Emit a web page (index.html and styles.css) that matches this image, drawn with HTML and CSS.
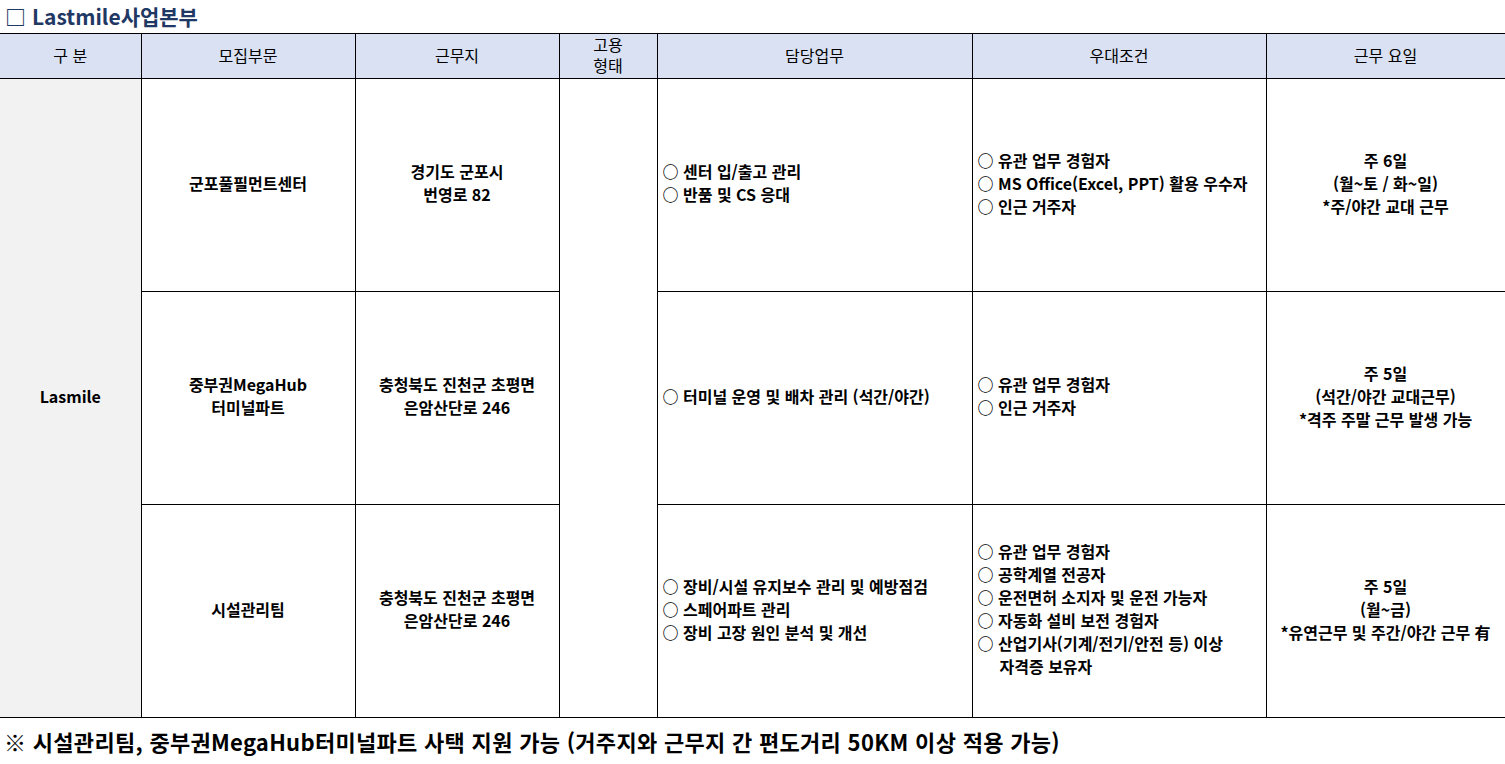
FILE: index.html
```html
<!DOCTYPE html>
<html lang="ko">
<head>
<meta charset="utf-8">
<link rel="stylesheet" href="styles.css">
</head>
<body>
<div class="title">□ Lastmile사업본부</div>
<table class="jobs">
  <colgroup>
    <col class="c1"><col class="c2"><col class="c3"><col class="c4"><col class="c5"><col class="c6"><col class="c7">
  </colgroup>
  <thead>
    <tr class="head">
      <th class="first">구 분</th>
      <th>모집부문</th>
      <th>근무지</th>
      <th>고용<br>형태</th>
      <th>담당업무</th>
      <th>우대조건</th>
      <th>근무 요일</th>
    </tr>
  </thead>
  <tbody>
    <tr class="row">
      <td class="first group" rowspan="3">Lasmile</td>
      <td class="center">군포풀필먼트센터</td>
      <td class="center">경기도 군포시<br>번영로 82</td>
      <td class="empty" rowspan="3"></td>
      <td class="left">
        <div class="item">○ 센터 입/출고 관리</div>
        <div class="item">○ 반품 및 CS 응대</div>
      </td>
      <td class="left">
        <div class="item">○ 유관 업무 경험자</div>
        <div class="item">○ MS Office(Excel, PPT) 활용 우수자</div>
        <div class="item">○ 인근 거주자</div>
      </td>
      <td class="center">주 6일<br>(월~토 / 화~일)<br>*주/야간 교대 근무</td>
    </tr>
    <tr class="row">
      <td class="center">중부권MegaHub<br>터미널파트</td>
      <td class="center">충청북도 진천군 초평면<br>은암산단로 246</td>
      <td class="left">
        <div class="item">○ 터미널 운영 및 배차 관리 (석간/야간)</div>
      </td>
      <td class="left">
        <div class="item">○ 유관 업무 경험자</div>
        <div class="item">○ 인근 거주자</div>
      </td>
      <td class="center">주 5일<br>(석간/야간 교대근무)<br>*격주 주말 근무 발생 가능</td>
    </tr>
    <tr class="row">
      <td class="center">시설관리팀</td>
      <td class="center">충청북도 진천군 초평면<br>은암산단로 246</td>
      <td class="left">
        <div class="item">○ 장비/시설 유지보수 관리 및 예방점검</div>
        <div class="item">○ 스페어파트 관리</div>
        <div class="item">○ 장비 고장 원인 분석 및 개선</div>
      </td>
      <td class="left">
        <div class="item">○ 유관 업무 경험자</div>
        <div class="item">○ 공학계열 전공자</div>
        <div class="item">○ 운전면허 소지자 및 운전 가능자</div>
        <div class="item">○ 자동화 설비 보전 경험자</div>
        <div class="item hang">○ 산업기사(기계/전기/안전 등) 이상<br>자격증 보유자</div>
      </td>
      <td class="center">주 5일<br>(월~금)<br>*유연근무 및 주간/야간 근무 有</td>
    </tr>
  </tbody>
</table>
<div class="note">※ 시설관리팀, 중부권MegaHub터미널파트 사택 지원 가능 (거주지와 근무지 간 편도거리 50KM 이상 적용 가능)</div>
</body>
</html>
```

FILE: styles.css
```css
html, body {
  margin: 0;
  padding: 0;
  background: #ffffff;
}

body {
  font-family: "Noto Sans CJK KR", "Noto Sans", sans-serif;
  color: #000000;
  width: 1505px;
}

.title {
  height: 33px;
  display: flex;
  align-items: center;
  padding-left: 5px;
  font-size: 21px;
  font-weight: 700;
  color: #1f3864;
  line-height: 1;
}

.jobs {
  width: 1505px;
  border-collapse: collapse;
  table-layout: fixed;
  font-size: 16px;
}

.c1 { width: 141px; }
.c2 { width: 214px; }
.c3 { width: 204px; }
.c4 { width: 98px; }
.c5 { width: 315px; }
.c6 { width: 294px; }
.c7 { width: 239px; }

.jobs th,
.jobs td {
  border: 1px solid #000000;
  padding: 0;
  line-height: 23px;
  vertical-align: middle;
}

.jobs .first {
  border-left: none;
}

.head th {
  height: 42px;
  line-height: 21px;
  padding-bottom: 2px;
  background: #d9e1f2;
  font-weight: 400;
  text-align: center;
}

.row td {
  height: 208px;
  padding-bottom: 4px;
  font-weight: 700;
}

.group {
  background: #f2f2f2;
  text-align: center;
}

.center {
  text-align: center;
}

.left {
  text-align: left;
  padding-left: 5px !important;
}

.item {
  white-space: nowrap;
}

.hang {
  padding-left: 22px;
  text-indent: -22px;
}

.note {
  height: 46px;
  display: flex;
  align-items: center;
  padding-left: 4px;
  font-size: 22px;
  font-weight: 700;
  letter-spacing: 0.3px;
  line-height: 1;
}
```
